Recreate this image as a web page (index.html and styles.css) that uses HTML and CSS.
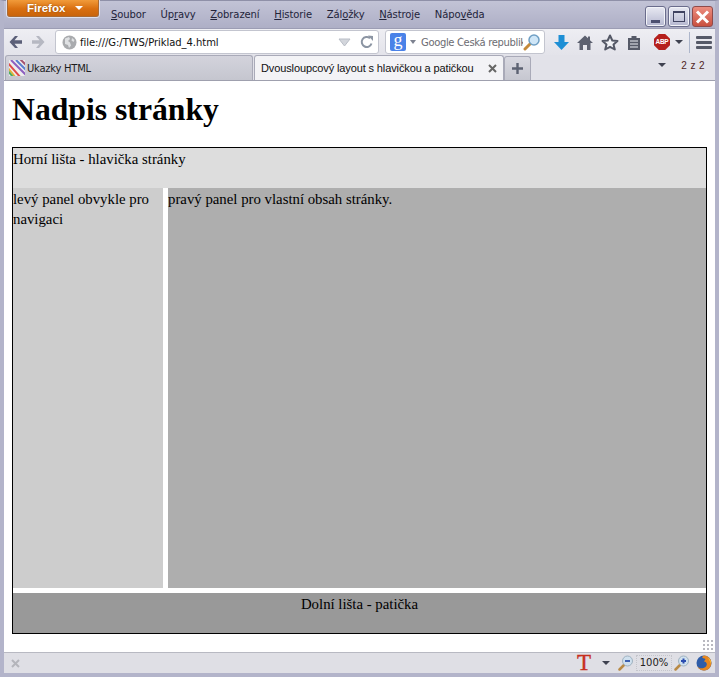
FILE: index.html
```html
<!DOCTYPE html>
<html lang="cs">
<head>
<meta charset="utf-8">
<title>Dvousloupcový layout s hlavičkou a patičkou</title>
<link rel="stylesheet" href="styles.css">
</head>
<body>
<div class="window">
  <div class="titlebar">
    <div class="ff-button"><span>Firefox</span><i class="caret caret-white"></i></div>
    <nav class="menu">
      <span><u>S</u>oubor</span><span>Úp<u>r</u>avy</span><span><u>Z</u>obrazení</span><span><u>H</u>istorie</span><span>Zál<u>o</u>žky</span><span><u>N</u>ástroje</span><span>Nápo<u>v</u>ěda</span>
    </nav>
    <div class="winbtns">
      <div class="winbtn"><i class="min"></i></div>
      <div class="winbtn wide"><i class="max"></i></div>
      <div class="winbtn close">
        <svg width="19" height="16" viewBox="0 0 19 16"><path d="M4 2.500 15 13.500M15 2.500 4 13.500" stroke="#fff" stroke-width="3" fill="none"/></svg>
      </div>
    </div>
  </div>
  <div class="navbar">
    <svg class="arrow" width="16" height="14" viewBox="0 0 16 14"><path d="M7 1 1.500 7 7 13h3L6.500 8.800H14V5.200H6.500L10 1z" fill="#5b5f78"/></svg>
    <svg class="arrow" width="16" height="14" viewBox="0 0 16 14"><path d="M9 1 14.500 7 9 13H6L9.500 8.800H2V5.200H9.500L6 1z" fill="#b6b8c2"/></svg>
    <div class="urlbar">
      <svg width="15" height="15" viewBox="0 0 15 15"><circle cx="7.500" cy="7.500" r="7" fill="#a9abae"/><path d="M3 3.500 7 2l1 2-2 2 2 1.500 1 3-2 2.500-1-3-3-1zM10 3l2.500 2-1 2-2-1.500z" fill="#dfe1e3"/></svg>
      <span class="url">file:///G:/TWS/Priklad_4.html</span>
      <svg class="url-drop" width="13" height="9" viewBox="0 0 13 9"><path d="M1 1h11L6.500 8z" fill="#d3d6dc" stroke="#b9bdc6"/></svg>
      <svg class="reload" width="14" height="14" viewBox="0 0 14 14"><path d="M11.500 8.500A5 5 0 1 1 10 3.200" stroke="#8c95a3" stroke-width="2" fill="none"/><path d="M8 .5 13 1v5z" fill="#8c95a3"/></svg>
    </div>
    <div class="searchbar">
      <div class="g-badge">g</div>
      <i class="caret caret-grey"></i>
      <span class="search-text">Google Česká republik</span>
      <svg class="loupe" width="18" height="18" viewBox="0 0 18 18"><path d="M7.500 10.500 2 16" stroke="#c48a3a" stroke-width="3" stroke-linecap="round"/><circle cx="11" cy="7" r="5" fill="#cfe6f7" stroke="#6f9fc4" stroke-width="1.500"/></svg>
    </div>
    <div class="tools">
      <svg width="15" height="17" viewBox="0 0 15 17"><path d="M4.500 1h6v7H15l-7.500 8L0 8h4.500z" fill="#1e8fd5"/></svg>
      <svg width="16" height="15" viewBox="0 0 16 15"><path d="M8 .5 11 3.300V1.500h2v3.700L16 8h-2.500v7H10v-5H6v5H2.500V8H0z" fill="#5d6170"/></svg>
      <svg width="18" height="17" viewBox="0 0 18 17"><path d="M9 1.500 11.300 6.500 16.500 7 12.500 10.500 13.800 15.500 9 12.800 4.200 15.500 5.500 10.500 1.500 7 6.700 6.500z" fill="#f1f2f6" stroke="#545866" stroke-width="2" stroke-linejoin="round"/></svg>
      <svg width="14" height="15" viewBox="0 0 14 15"><path d="M1 3h3.500V1h5v2H13v12H1z" fill="#565a68"/><path d="M3 6h8M3 9h8M3 12h8" stroke="#eceef3" stroke-width="1.200"/></svg>
      <div class="abp">ABP</div>
      <i class="caret caret-dark abp-caret"></i>
      <div class="sep"></div>
      <div class="burger"><i></i><i></i><i></i></div>
    </div>
  </div>
  <div class="tabbar">
    <div class="tab inactive">
      <svg width="16" height="16" viewBox="0 0 16 16"><rect width="16" height="16" fill="#eee"/><path d="M-2 2 12 18" stroke="#e04a4a" stroke-width="2"/><path d="M2 0 18 16" stroke="#8e5fc0" stroke-width="2"/><path d="M-2 7 7 18" stroke="#e3b23c" stroke-width="2"/><path d="M7 0 18 11" stroke="#5a7fd0" stroke-width="2"/><path d="M-1 11 4 17" stroke="#4cae62" stroke-width="2"/><path d="M11 -1 18 6" stroke="#a4526f" stroke-width="2"/></svg>
      <span>Ukazky HTML</span>
    </div>
    <div class="tab active">
      <span>Dvousloupcový layout s hlavičkou a patičkou</span>
      <svg width="9" height="9" viewBox="0 0 9 9"><path d="M1 1 8 8M8 1 1 8" stroke="#666" stroke-width="2"/></svg>
    </div>
    <div class="newtab">
      <svg width="13" height="13" viewBox="0 0 13 13"><path d="M6.500 1v11M1 6.500h11" stroke="#5c6272" stroke-width="2.400"/></svg>
    </div>
    <div class="tabbar-right">
      <i class="caret caret-dark"></i>
      <span class="counter">2 z 2</span>
    </div>
  </div>
  <main class="content">
    <h1>Nadpis stránky</h1>
    <div class="frame">
      <div class="head">Horní lišta - hlavička stránky</div>
      <div class="cols">
        <div class="left">levý panel obvykle pro navigaci</div>
        <div class="right">pravý panel pro vlastní obsah stránky.</div>
      </div>
      <div class="foot">Dolní lišta - patička</div>
    </div>
    <div class="grip"></div>
  </main>
  <footer class="statusbar">
    <svg class="stop" width="9" height="9" viewBox="0 0 9 9"><path d="M1 1 8 8M8 1 1 8" stroke="#b4b5bb" stroke-width="2"/></svg>
    <div class="status-right">
      <span class="t-icon">T</span>
      <i class="caret caret-dark"></i>
      <svg class="zoom-out" width="16" height="16" viewBox="0 0 16 16"><path d="M6 10 1.500 14.500" stroke="#b98a45" stroke-width="2.500" stroke-linecap="round"/><circle cx="9.500" cy="6" r="5" fill="#cfe0ee" stroke="#9fb2c0"/><path d="M7 6h5" stroke="#3c5fb0" stroke-width="2"/></svg>
      <span class="zoom-val">100%</span>
      <svg width="16" height="16" viewBox="0 0 16 16"><path d="M6 10 1.500 14.500" stroke="#b98a45" stroke-width="2.500" stroke-linecap="round"/><circle cx="9.500" cy="6" r="5" fill="#cfe0ee" stroke="#9fb2c0"/><path d="M7 6h5M9.500 3.500v5" stroke="#2a4cb0" stroke-width="2"/></svg>
      <svg class="fox" width="16" height="16" viewBox="0 0 16 16"><circle cx="8" cy="8" r="7.500" fill="#2f5da8"/><path d="M8 .5A7.500 7.500 0 1 1 1 11C3 14 8 14 10 11.500 12 9 10 6.500 8 6.500L9.500 4C8 3 6.500 3.500 6 2z" fill="#e8871e"/><path d="M12 2.500A7.500 7.500 0 0 1 15 9C14 6 13 4.500 12 2.500z" fill="#f7c63c"/></svg>
    </div>
  </footer>
</div>
</body>
</html>
```
FILE: styles.css
```css
* { box-sizing: border-box; }
html, body { margin: 0; padding: 0; }
body { width: 719px; height: 677px; overflow: hidden; background: #73748f; }
i { display: block; }
u { text-decoration: underline; }

.window {
  width: 719px;
  height: 677px;
  display: flex;
  flex-direction: column;
  border: 4px solid #b3b4ca;
  border-top: 1px solid #8f90a8;
  box-shadow: inset 1px 0 #7b7c99, inset -1px 0 #7b7c99, inset 0 -1px #7b7c99;
  background: #b3b4ca;
  font-family: "DejaVu Sans", Verdana, sans-serif;
  font-size: 10px;
  color: #1d1d1d;
}

.caret { width: 0; height: 0; border-left: 4px solid transparent; border-right: 4px solid transparent; border-top: 4px solid #444; }
.caret-white { border-top-color: #fff; }
.caret-grey { border-top-color: #7d8290; border-left-width: 3px; border-right-width: 3px; }
.caret-dark { border-top-color: #3f4250; }

.titlebar { height: 27px; display: flex; align-items: flex-start; background: linear-gradient(#c2c3d6, #aeafc6); flex: none; }
.ff-button {
  width: 92px; height: 17px; margin: -1px 0 0 3px; padding-left: 19px;
  display: flex; align-items: center; gap: 10px;
  background: linear-gradient(#f19b3a, #d96f10 55%, #c9640c);
  border: 1px solid #ab6a33; border-top: 0; border-radius: 0 0 3px 3px;
  box-shadow: 0 0 0 1px #dfe1ee;
  color: #fff; font-family: "Liberation Sans", Arial, sans-serif; font-weight: bold; font-size: 11.500px; text-shadow: 0 0 2px #8c4a0a;
}
.menu { display: flex; gap: 14.700px; margin: 7px 0 0 12px; color: #23243a; line-height: 14px; letter-spacing: -.1px; }
.winbtns { margin-left: auto; display: flex; gap: 2px; padding: 5px 2px 0 0; }
.winbtn { width: 21px; height: 21px; border: 1px solid #6a6c8c; border-radius: 3px; background: linear-gradient(#e8e9f2, #b5b7d0); display: flex; align-items: center; justify-content: center; box-shadow: inset 0 0 0 1px #f2f3f8; }
.winbtn.wide { width: 22px; }
.winbtn.close { background: linear-gradient(#ec8d80, #c9503f); border-color: #8f4a4a; box-shadow: none; }
.min { width: 9px; height: 3px; background: #4c4f70; margin-top: 9px; }
.max { width: 12px; height: 11px; border: 1px solid #3f4260; border-top-width: 2px; }

.navbar { height: 27px; flex: none; display: flex; align-items: center; background: linear-gradient(#eeeef3, #e3e3ea); padding: 0 0 0 4px; border-top: 1px solid #9c9db4; }
.arrow { margin-right: 6px; }
.arrow + .arrow { margin-right: 0; }
.urlbar { margin-left: 9px; width: 324px; height: 24px; background: #fff; border: 1px solid #c3c5cf; border-radius: 3px; display: flex; align-items: center; padding: 0 4px 0 6px; }
.url { margin-left: 3px; flex: 1; color: #111; letter-spacing: -.05px; }
.url-drop { margin-right: 9px; }
.searchbar { margin-left: 6px; width: 160px; height: 24px; background: #fff; border: 1px solid #c3c5cf; border-radius: 3px; display: flex; align-items: center; padding: 0 1px 0 4px; }
.g-badge { width: 16px; height: 18px; background: #4a82e8; border-radius: 2px; color: #fff; font-family: "Liberation Serif", serif; font-size: 18px; line-height: 14px; text-align: center; flex: none; }
.searchbar .caret { margin: 0 5px 0 4px; flex: none; }
.search-text { color: #6c6c72; width: 102px; overflow: hidden; white-space: nowrap; letter-spacing: -.35px; }
.loupe { flex: none; }
.tools { display: flex; align-items: center; margin-left: 9px; gap: 8px; }
.abp { width: 16px; height: 16px; clip-path: polygon(30% 0, 70% 0, 100% 30%, 100% 70%, 70% 100%, 30% 100%, 0 70%, 0 30%); background: #b5201c; color: #fff; font-family: "Liberation Sans", Arial, sans-serif; font-size: 6.500px; font-weight: bold; line-height: 16px; text-align: center; margin-left: 5px; letter-spacing: -.3px; }
.abp-caret { margin-left: -3px; }
.sep { width: 1px; height: 21px; background: #adb6cb; margin-left: -2px; }
.burger { display: flex; flex-direction: column; gap: 2px; margin-left: -2px; }
.burger i { width: 16px; height: 3px; background: #565a68; border-radius: 1px; }

.tabbar { height: 26px; flex: none; display: flex; align-items: flex-end; background: #e2e2e9; border-bottom: 1px solid #9fa0ae; padding-left: 1px; }
.tab { height: 25px; display: flex; align-items: center; border: 1px solid #a9aab8; border-bottom: 0; border-radius: 3px 3px 0 0; }
.tab.inactive { width: 248px; gap: 2px; padding-left: 3px; background: linear-gradient(#d3d3dc, #c5c6cf); letter-spacing: -.25px; }
.tab.active { width: 250px; margin-left: 1px; padding: 0 6px; background: #f3f3f6; justify-content: space-between; color: #111; white-space: nowrap; font-family: "Liberation Sans", Arial, sans-serif; font-size: 11px; letter-spacing: -.12px; }
.newtab { width: 27px; height: 24px; display: flex; align-items: center; justify-content: center; background: linear-gradient(#d9d9e1, #c6c7d0); border: 1px solid #a9aab8; border-bottom: 0; border-radius: 3px 3px 0 0; }
.tabbar-right { margin-left: auto; display: flex; align-items: center; gap: 15px; height: 24px; padding: 0 10px 6px 0; }
.counter { color: #4f1f24; font-family: "Liberation Sans", Arial, sans-serif; font-size: 10px; letter-spacing: .4px; }

.content { flex: 1; min-height: 0; background: #fff; padding: 1px 8px 0; position: relative; font-family: "Liberation Serif", "Times New Roman", serif; font-size: 14.800px; line-height: 20px; color: #000; }
h1 { margin: 10px 0 20px; font-size: 31.700px; line-height: 35px; font-weight: bold; }
.frame { border: 1px solid #000; height: 487px; display: flex; flex-direction: column; }
.head { height: 40px; padding-top: 1px; background: #ddd; }
.cols { height: 400px; display: flex; gap: 5px; }
.left { width: 150px; padding-top: 1px; background: #cdcdcd; }
.right { flex: 1; padding-top: 1px; background: #aeaeae; }
.foot { margin-top: 5px; padding-top: 1px; flex: 1; background: #999; text-align: center; }
.grip { position: absolute; right: 1px; bottom: 1px; width: 11px; height: 11px; background: radial-gradient(circle at 1px 1px, #b9b9c0 1px, transparent 1.200px) 0 0 / 4px 4px; }

.statusbar { height: 21px; flex: none; display: flex; align-items: center; background: #dfdfe5; border-top: 1px solid #b8b9c2; padding: 0 3px 0 7px; }
.status-right { margin-left: auto; display: flex; align-items: center; gap: 2px; }
.status-right .caret { margin-left: 9px; }
.zoom-out { margin-left: 6px; }
.fox { margin-left: 4px; }
.t-icon { color: #c7301f; font-family: "Liberation Serif", serif; font-size: 23px; -webkit-text-stroke: .4px #c7301f; line-height: 18px; }
.zoom-val { width: 36px; height: 16px; border: 1px dotted #c4c5cb; color: #222; font-size: 10px; line-height: 14px; text-align: center; }
```
